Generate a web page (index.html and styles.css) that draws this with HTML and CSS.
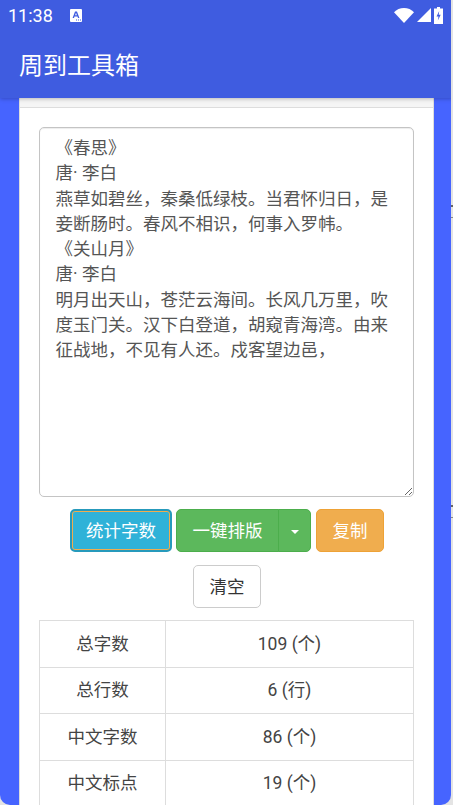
FILE: index.html
```html
<!DOCTYPE html>
<html lang="zh-CN">

<head>
    <meta charset="UTF-8">
    <meta name="viewport" content="width=device-width, initial-scale=1.0">
    <title>周到工具箱</title>
    <link rel="stylesheet" href="styles.css">
</head>

<body>
    <div class="app">
        <header class="appbar">
            <div class="status">
                <div class="status-left">
                    <span class="time">11:38</span>
                    <svg class="sim" width="12" height="13" viewBox="0 0 12 13">
                        <path fill="#fff" d="M1 0h10a1 1 0 0 1 1 1v11a1 1 0 0 1-1 1H1a1 1 0 0 1-1-1V1a1 1 0 0 1 1-1z" />
                        <path fill="#3f5ce0" d="M5 2.500h2l2.400 6.500H8L7.500 7.500h-3L4 9H2.600zM5.100 6.200h1.800L6 3.800zM6 10.500h1v1H6zM8 10.500h1v1H8zM10 10.500h1v1h-1z" />
                    </svg>
                </div>
                <div class="status-right">
                    <svg width="20" height="15" viewBox="0 0 20 15">
                        <path fill="#fff" d="M0 4.200C2.600 1.600 6.100 0 10 0s7.400 1.600 10 4.200L10 15z" />
                    </svg>
                    <svg width="14" height="14" viewBox="0 0 14 14">
                        <path fill="#fff" d="M14 0v14H0z" />
                    </svg>
                    <svg width="9" height="17" viewBox="0 0 9 17">
                        <path fill="#fff" d="M3 0h3v1.500h3V17H0V1.500h3z" />
                        <path fill="#3f5ce0" d="M5.200 4L2.500 9.500h2l-.7 4 2.900-5.800h-2z" />
                    </svg>
                </div>
            </div>
            <div class="title">周到工具箱</div>
        </header>

        <main class="card">
            <div class="card-head"></div>
            <div class="card-body">
                <textarea class="editor" readonly>《春思》
唐· 李白
燕草如碧丝，秦桑低绿枝。当君怀归日，是妾断肠时。春风不相识，何事入罗帏。
《关山月》
唐· 李白
明月出天山，苍茫云海间。长风几万里，吹度玉门关。汉下白登道，胡窥青海湾。由来征战地，不见有人还。戍客望边邑，</textarea>

                <div class="actions">
                    <button class="btn btn-info">统计字数</button>
                    <div class="btn-group">
                        <button class="btn btn-success btn-main">一键排版</button>
                        <button class="btn btn-success btn-caret"><span class="caret"></span></button>
                    </div>
                    <button class="btn btn-warning">复制</button>
                    <button class="btn btn-default">清空</button>
                </div>

                <table class="stats">
                    <tr>
                        <td class="label">总字数</td>
                        <td>109 (个)</td>
                    </tr>
                    <tr>
                        <td class="label">总行数</td>
                        <td>6 (行)</td>
                    </tr>
                    <tr>
                        <td class="label">中文字数</td>
                        <td>86 (个)</td>
                    </tr>
                    <tr>
                        <td class="label">中文标点</td>
                        <td>19 (个)</td>
                    </tr>
                </table>
            </div>
        </main>
    </div>
</body>

</html>
```

FILE: styles.css
```css
* {
    box-sizing: border-box;
}

html,
body {
    margin: 0;
    padding: 0;
    height: 100%;
    overflow: hidden;
}

body {
    background: repeating-linear-gradient(#e4e4e4 0, #e4e4e4 205px, #666 205px, #666 207px, #e4e4e4 207px, #e4e4e4 217px, #888 217px, #888 218px, #e4e4e4 218px, #e4e4e4 300px);
    color: #444;
    font-family: "Roboto", "Noto Sans CJK SC", sans-serif;
    font-size: 17.500px;
}

.app {
    width: 451px;
    height: 805px;
    overflow: hidden;
    background: #4664ff;
    border-radius: 0 0 10px 10px;
}

.appbar {
    position: relative;
    z-index: 1;
    width: 453px;
    height: 98px;
    background: #3f5ce0;
    color: #fff;
    box-shadow: 0 1px 4px rgba(0, 0, 0, .25);
}

.status {
    height: 30px;
    padding: 0 10px 0 8px;
    display: flex;
    justify-content: space-between;
    align-items: center;
}

.status-left,
.status-right {
    display: flex;
    align-items: center;
}

.time {
    font-size: 18px;
}

.sim {
    margin-left: 17px;
}

.status-right svg {
    margin-left: 3px;
}

.title {
    padding: 19px 0 0 19px;
    font-size: 24px;
    line-height: 35px;
}

.card {
    width: 415px;
    margin-left: 19px;
    background: #fff;
    border: 1px solid #ddd;
    border-width: 0 1px;
}

.card-head {
    height: 10px;
    background: #f5f5f5;
    border-bottom: 1px solid #ddd;
}

.card-body {
    padding: 19px;
}

.editor {
    display: block;
    width: 375px;
    height: 370px;
    padding: 8px 15.500px;
    border: 1px solid #c4c4c4;
    border-radius: 5px;
    box-shadow: inset 0 1px 1px rgba(0, 0, 0, .075);
    color: #555;
    font: 17.500px/25.300px "Roboto", "Noto Sans CJK SC", sans-serif;
    outline: none;
    resize: vertical;
}

.actions {
    display: flex;
    flex-wrap: wrap;
    justify-content: center;
    gap: 13px 4px;
    margin-top: 12px;
    padding-left: 1px;
}

.btn {
    height: 43px;
    padding: 0 15.500px 2px;
    border: 1px solid transparent;
    border-radius: 5px;
    color: #fff;
    font: 17.500px "Roboto", "Noto Sans CJK SC", sans-serif;
}

.btn-info {
    padding: 0 14px 2px;
    background: #2fb2d8;
    border: 2px solid #269abc;
    box-shadow: inset 0 0 0 1px #f0ad4e;
}

.btn-group {
    display: flex;
}

.btn-success {
    background: #5cb85c;
    border-color: #4cae4c;
}

.btn-main {
    border-radius: 5px 0 0 5px;
}

.btn-caret {
    width: 33px;
    padding: 0;
    margin-left: -1px;
    border-radius: 0 5px 5px 0;
}

.caret {
    display: inline-block;
    vertical-align: middle;
    border-top: 4px solid #fff;
    border-left: 4px solid transparent;
    border-right: 4px solid transparent;
}

.btn-warning {
    margin-left: 1px;
    background: #f0ad4e;
    border-color: #eea236;
}

.btn-default {
    background: #fff;
    border-color: #ccc;
    color: #333;
}

.stats {
    width: 375px;
    margin-top: 12px;
    border-collapse: collapse;
    table-layout: fixed;
}

.stats td {
    height: 46.500px;
    padding: 0 0 3px;
    border: 1px solid #ddd;
    text-align: center;
}

.stats .label {
    width: 126px;
}
```
